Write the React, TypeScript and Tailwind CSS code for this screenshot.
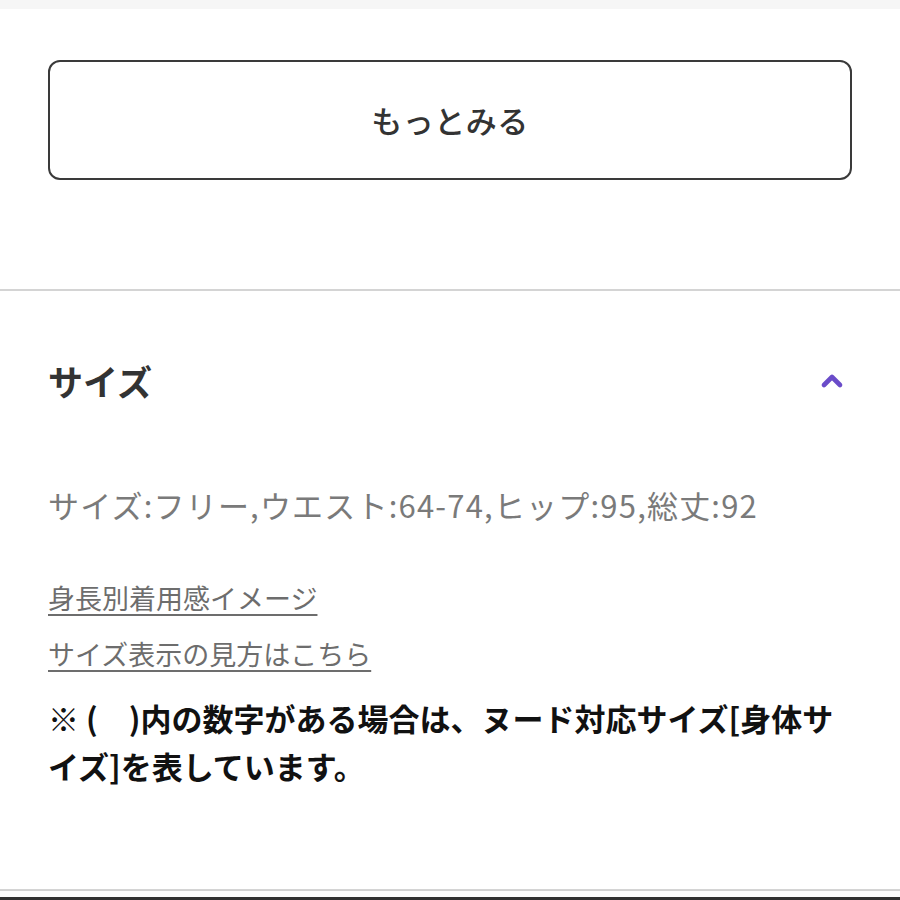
import { ChevronUp } from "lucide-react";

const jp = "font-['Noto_Sans_CJK_JP','Noto_Sans',sans-serif]";

export default function App() {
  return (
    <div className={`w-[900px] h-[900px] overflow-hidden bg-white ${jp}`}>
      <div className="h-[9px] bg-[#f6f6f6]" />
      <div className="px-12 pt-[51px] pb-[109px]">
        <button className="w-full h-[120px] rounded-[12px] border-2 border-[#3a3a3a] bg-white text-[31px] font-medium text-[#333] tracking-[0.5px]">
          もっとみる
        </button>
      </div>
      <div className="h-[2px] bg-[#d4d4d4]" />
      <section className="px-12">
        <div className="flex items-center justify-between h-[180px]">
          <h2 className="text-[35px] font-bold text-[#333]">サイズ</h2>
          <ChevronUp className="w-8 h-8 mr-[4px] text-[#6a4cc9]" strokeWidth={3.5} />
        </div>
        <p className="text-[31px] text-[#7a7a7a] leading-none mt-[18px] tracking-[1.2px]">
          サイズ:フリー,ウエスト:64-74,ヒップ:95,総丈:92
        </p>
        <div className="mt-[62px] flex flex-col items-start gap-[24px] text-[27px] text-[#6d6d6d] leading-[32px]">
          <a className="underline underline-offset-[5px] decoration-2">身長別着用感イメージ</a>
          <a className="underline underline-offset-[5px] decoration-2">サイズ表示の見方はこちら</a>
        </div>
        <p className="mt-[24px] text-[31px] font-bold text-[#111] leading-[48px]">
          ※ (　)内の数字がある場合は、ヌード対応サイズ[身体サ
          <br />
          イズ]を表しています。
        </p>
      </section>
      <div className="mt-[99px] h-[2px] bg-[#d4d4d4]" />
      <div className="mt-[6px] h-[4px] bg-[#333]" />
    </div>
  );
}
